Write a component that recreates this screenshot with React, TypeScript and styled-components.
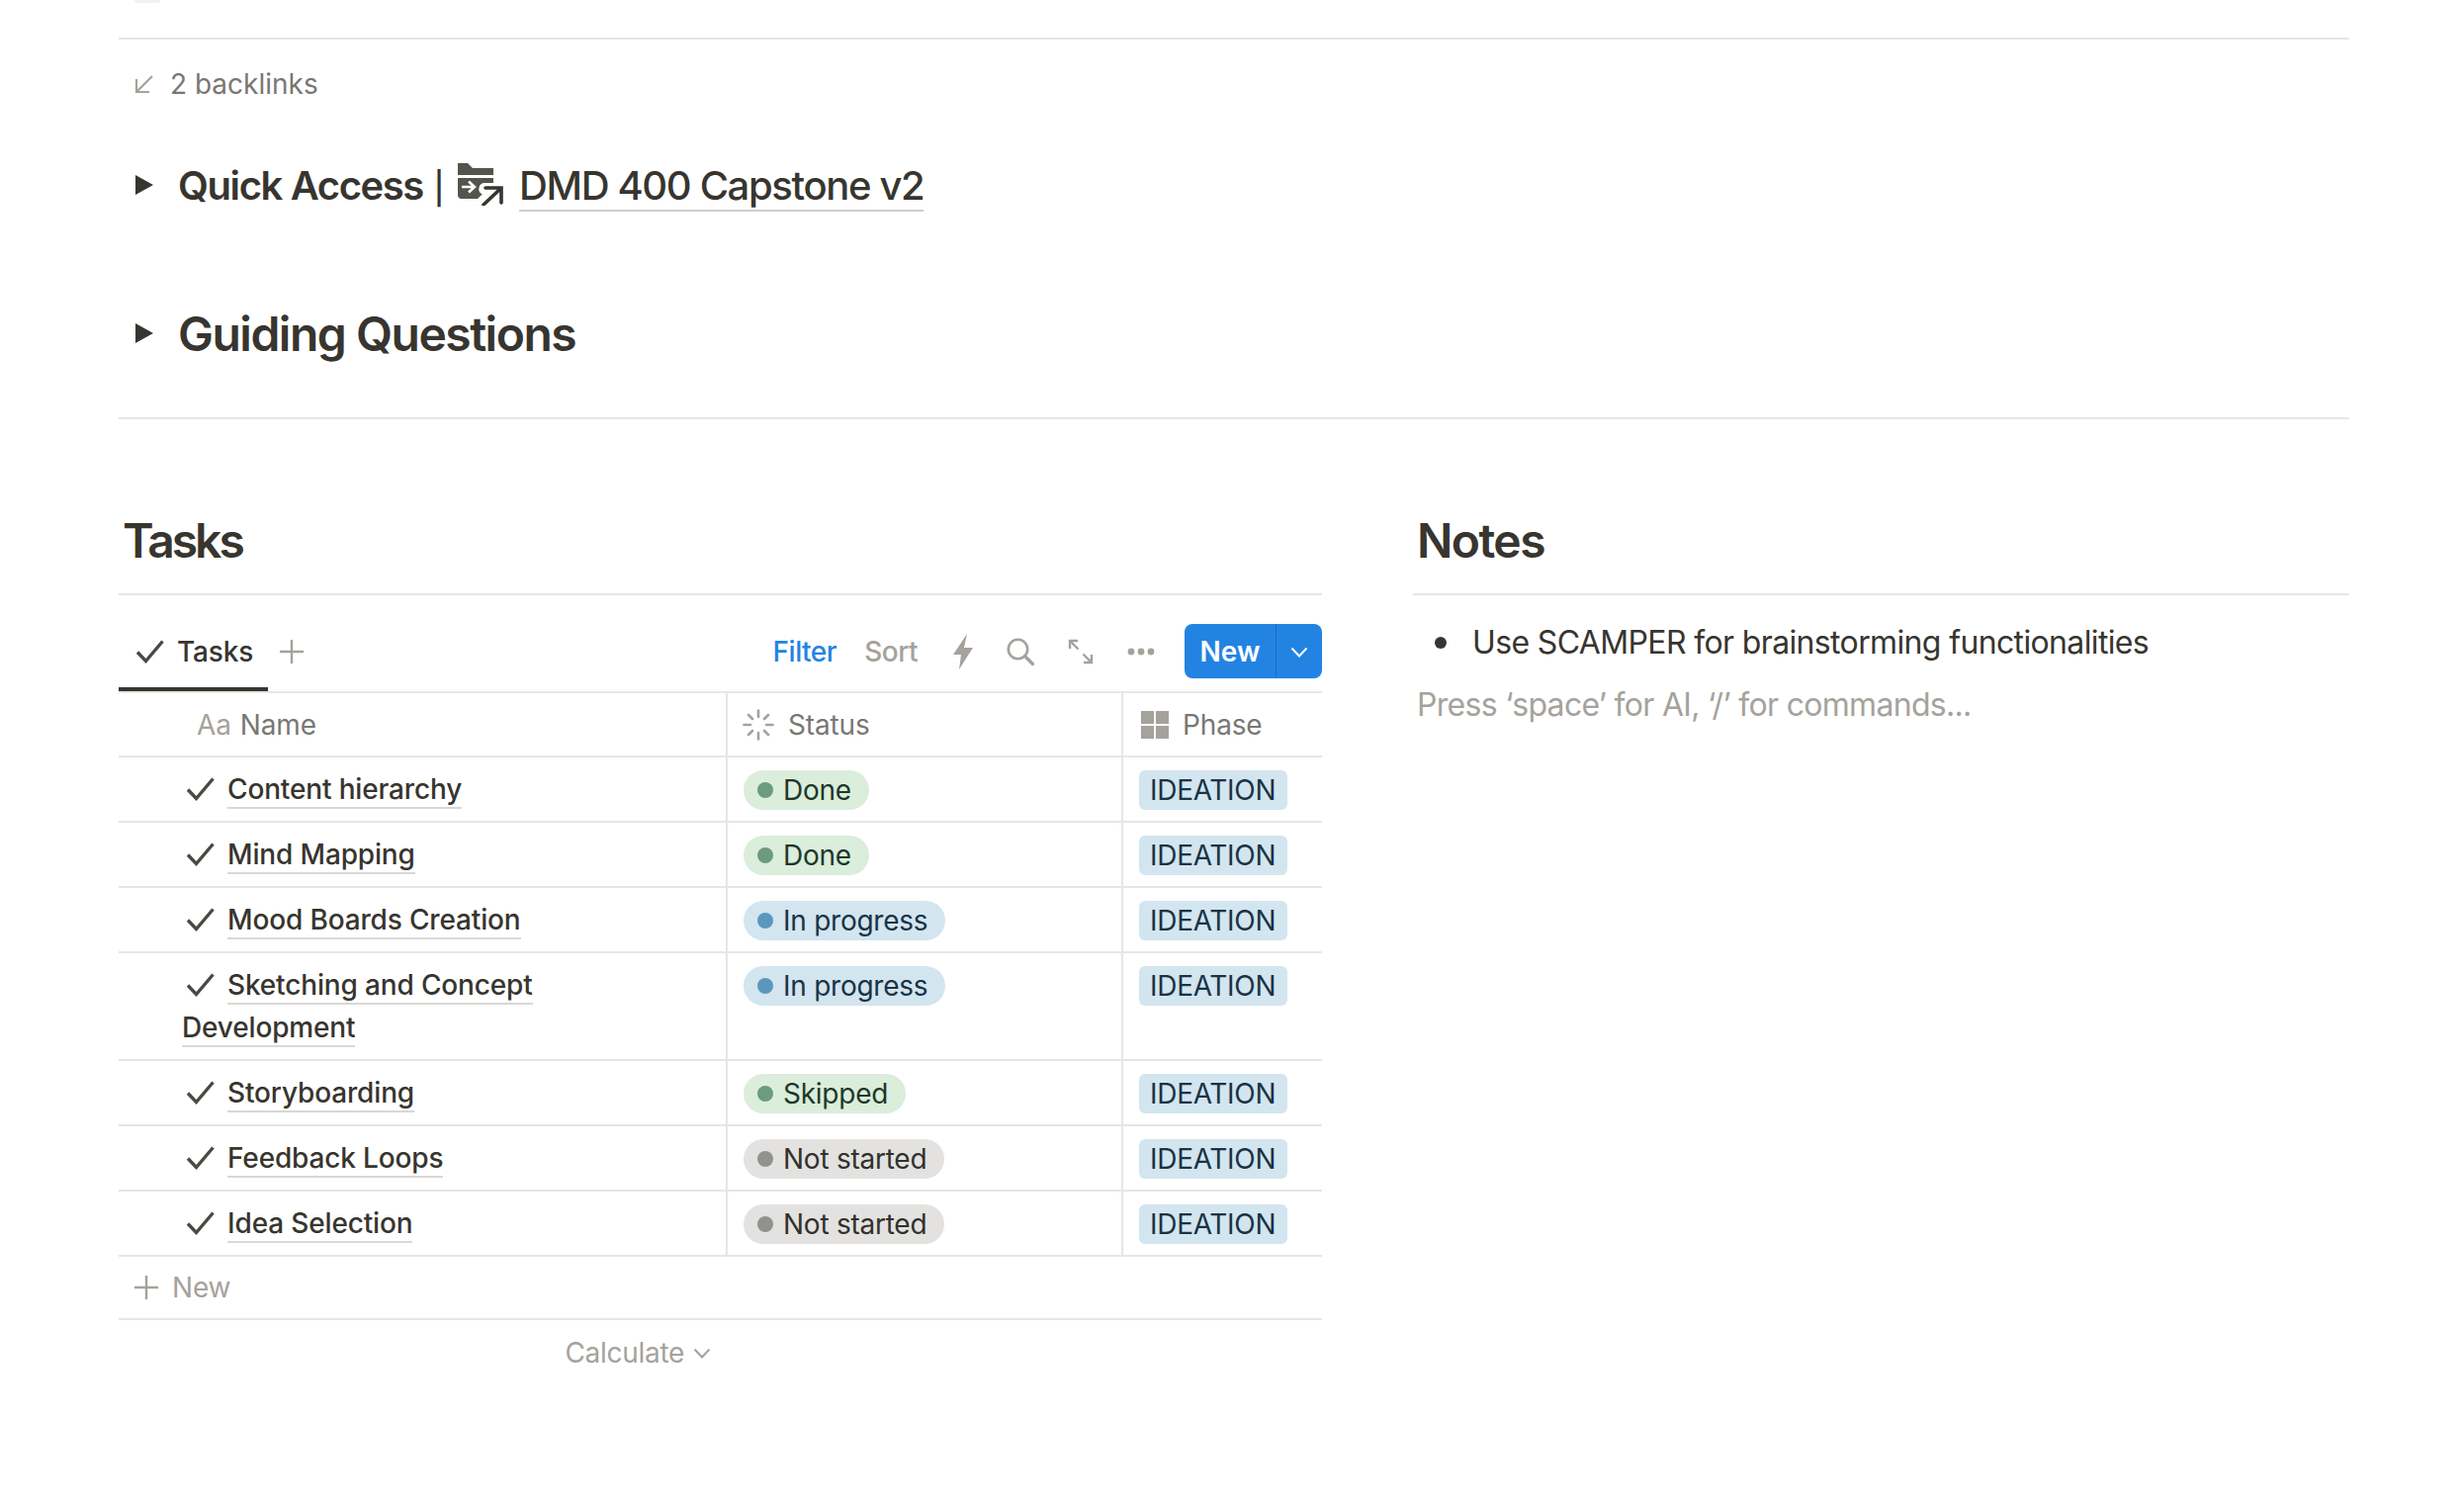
import React from 'react';
import styled, { createGlobalStyle } from 'styled-components';

const GlobalStyle = createGlobalStyle`
  html, body {
    margin: 0;
    padding: 0;
    background: #fff;
    color: #37352f;
    font-family: Inter, "Liberation Sans", sans-serif;
  }
`;

type StatusKind = 'done' | 'progress' | 'idle';

const tasks: { name: string; status: string; kind: StatusKind }[] = [
  { name: 'Content hierarchy', status: 'Done', kind: 'done' },
  { name: 'Mind Mapping', status: 'Done', kind: 'done' },
  { name: 'Mood Boards Creation', status: 'In progress', kind: 'progress' },
  { name: 'Sketching and Concept Development', status: 'In progress', kind: 'progress' },
  { name: 'Storyboarding', status: 'Skipped', kind: 'done' },
  { name: 'Feedback Loops', status: 'Not started', kind: 'idle' },
  { name: 'Idea Selection', status: 'Not started', kind: 'idle' },
];

const pillColors = {
  done: { bg: '#dbeddb', dot: '#6c9b7d', fg: '#1c3829' },
  progress: { bg: '#d3e5ef', dot: '#5b97bd', fg: '#183347' },
  idle: { bg: '#e3e2e0', dot: '#91918e', fg: '#32302c' },
};

const Check = () => (
  <CheckSvg width={30} height={30} viewBox="0 0 30 30">
    <path d="M2 15.5 L10.5 24.5 L27.5 4.5" fill="none" stroke="currentColor" strokeWidth="3.4" />
  </CheckSvg>
);

const Plus = ({ size = 26 }: { size?: number }) => (
  <svg width={size} height={size} viewBox="0 0 26 26">
    <path d="M13 1V25M1 13H25" stroke="#a5a29c" strokeWidth="2.4" fill="none" />
  </svg>
);

const Chevron = ({ color, size = 18 }: { color: string; size?: number }) => (
  <svg width={size} height={size} viewBox="0 0 18 18">
    <path d="M1.5 5.5 L9 13.5 L16.5 5.5" stroke={color} strokeWidth="2" fill="none" />
  </svg>
);

const BacklinkArrow = () => (
  <svg width="20" height="20" viewBox="0 0 20 20">
    <path d="M18 2 L3 17 M2 5V18H15" stroke="#a5a29c" strokeWidth="2.2" fill="none" />
  </svg>
);

const Triangle = () => (
  <svg width="18" height="20" viewBox="0 0 18 20">
    <path d="M0 0 L18 10 L0 20Z" fill="#37352f" />
  </svg>
);

const FolderLink = () => (
  <FolderSvg width="48" height="44" viewBox="0 0 48 44">
    <path d="M1 1 H11 L16 6 H37 V13 H1Z" fill="#55534e" />
    <path d="M1 16 H37 V21 H28 A6 6 0 0 0 25 32 H26 L21 37 H5 A4 4 0 0 1 1 33Z" fill="#55534e" />
    <path d="M5 25 H17 M12 19.5 L18 25 L12 30.5" stroke="#fff" strokeWidth="2.6" fill="none" />
    <path d="M29 26 H45 V41 M44 27 L27 43" stroke="#37352f" strokeWidth="3.6" fill="none" strokeLinecap="round" />
  </FolderSvg>
);

const Bolt = () => (
  <svg width="20" height="36" viewBox="0 0 20 36">
    <path d="M14 0 L0 21 H8 L6 36 L20 14 H11Z" fill="#a5a29c" />
  </svg>
);

const Search = () => (
  <svg width="28" height="28" viewBox="0 0 28 28">
    <circle cx="11.5" cy="11.5" r="9.7" fill="none" stroke="#a5a29c" strokeWidth="2.6" />
    <path d="M18.5 18.5 L26.5 26.5" stroke="#a5a29c" strokeWidth="3.2" strokeLinecap="round" />
  </svg>
);

const Expand = () => (
  <svg width="26" height="26" viewBox="0 0 26 26">
    <path d="M2 10V2H10 M2 2 L10.5 10.5 M24 16V24H16 M24 24 L15.5 15.5" stroke="#a5a29c" strokeWidth="2.4" fill="none" />
  </svg>
);

const Dots = () => (
  <svg width="28" height="8" viewBox="0 0 28 8">
    <circle cx="4" cy="4" r="3.4" fill="#a5a29c" />
    <circle cx="14" cy="4" r="3.4" fill="#a5a29c" />
    <circle cx="24" cy="4" r="3.4" fill="#a5a29c" />
  </svg>
);

const Spinner = () => (
  <svg width="32" height="32" viewBox="0 0 32 32">
    <g stroke="#a5a29c" strokeWidth="2.6" strokeLinecap="round">
      <path d="M16 1.5V8M16 24V30.5M1.5 16H8M24 16H30.5M6 6L10 10M22 22L26 26M6 26L10 22M22 10L26 6" />
    </g>
  </svg>
);

const GridIcon = () => (
  <svg width="28" height="28" viewBox="0 0 28 28">
    <path d="M0 0H13V13H0ZM15 0H28V13H15ZM0 15H13V28H0ZM15 15H28V28H15Z" fill="#a5a29c" />
  </svg>
);

const App = () => (
  <React.Fragment>
    <GlobalStyle />
    <Page>
      <TopSmudge />
      <Rule />
      <Backlinks>
        <BacklinkArrow />
        <span>2 backlinks</span>
      </Backlinks>
      <Toggle $mt={52}>
        <Triangle />
        <ToggleTitle>
          Quick Access <Pipe>|</Pipe> <FolderLink />
          <PageLink>DMD 400 Capstone v2</PageLink>
        </ToggleTitle>
      </Toggle>
      <Toggle $mt={90}>
        <Triangle />
        <ToggleTitle $heavy>Guiding Questions</ToggleTitle>
      </Toggle>
      <Rule $mt={55} />
      <Columns>
        <TasksColumn>
          <Heading $tracking={-3}>Tasks</Heading>
          <Rule />
          <Toolbar>
            <Tab>
              <Check />
              <span>Tasks</span>
            </Tab>
            <AddView>
              <Plus />
            </AddView>
            <Actions>
              <ActionText $active $trail={-6}>Filter</ActionText>
              <ActionText $trail={2}>Sort</ActionText>
              <Bolt />
              <Search />
              <Expand />
              <Dots />
              <NewButton>
                <NewLabel>New</NewLabel>
                <NewCaret>
                  <Chevron color="#fff" />
                </NewCaret>
              </NewButton>
            </Actions>
          </Toolbar>
          <Table>
            <HeaderRow>
              <NameHeader>
                <AaMark>Aa</AaMark>
                <span>Name</span>
              </NameHeader>
              <HeaderCell>
                <Spinner />
                <span>Status</span>
              </HeaderCell>
              <HeaderCell $last>
                <GridIcon />
                <span>Phase</span>
              </HeaderCell>
            </HeaderRow>
            {tasks.map((task) => (
              <Row key={task.name}>
                <NameCell>
                  <Check />
                  <TaskLink>{task.name}</TaskLink>
                </NameCell>
                <StatusCell>
                  <Pill $kind={task.kind}>
                    <Dot $kind={task.kind} />
                    {task.status}
                  </Pill>
                </StatusCell>
                <PhaseCell>
                  <Tag>IDEATION</Tag>
                </PhaseCell>
              </Row>
            ))}
            <NewRow>
              <Plus />
              <span>New</span>
            </NewRow>
            <CalcRow>
              <CalcCell>
                <span>Calculate</span>
                <Chevron color="#a5a29c" />
              </CalcCell>
            </CalcRow>
          </Table>
        </TasksColumn>
        <NotesColumn>
          <Heading $tracking={-1.6}>Notes</Heading>
          <Rule />
          <Bullet>Use SCAMPER for brainstorming functionalities</Bullet>
          <Placeholder>Press ‘space’ for AI, ‘/’ for commands...</Placeholder>
        </NotesColumn>
      </Columns>
    </Page>
  </React.Fragment>
);

export default App;

const Page = styled('main')`
  width: 2256px;
  height: 1524px;
  margin-left: 120px;
  overflow: hidden;
`;

const TopSmudge = styled('div')`
  width: 26px;
  height: 3px;
  margin-left: 16px;
  margin-bottom: 35px;
  border-radius: 0 0 10px 10px;
  background: #f1f1ef;
`;

const Rule = styled('hr')<{ $mt?: number }>`
  height: 2px;
  margin: ${(p) => p.$mt ?? 0}px 0 0;
  border: 0;
  background: #e6e6e4;
`;

const Backlinks = styled('div')`
  display: flex;
  align-items: center;
  gap: 16px;
  height: 40px;
  margin-top: 25px;
  padding-left: 16px;
  font-size: 28px;
  color: #787774;
`;

const Toggle = styled('div')<{ $mt: number }>`
  display: flex;
  align-items: center;
  gap: 25px;
  height: 60px;
  margin-top: ${(p) => p.$mt}px;
  padding-left: 17px;
`;

const ToggleTitle = styled('div')<{ $heavy?: boolean }>`
  font-size: ${(p) => (p.$heavy ? 48 : 40)}px;
  font-weight: 600;
  letter-spacing: ${(p) => (p.$heavy ? -1.5 : -1.4)}px;
  white-space: pre;
`;

const Pipe = styled('span')`
  font-size: 32px;
  font-weight: 500;
  margin: 0 2px;
`;

const FolderSvg = styled('svg')`
  display: inline-block;
  margin: 0 15px 0 3px;
  vertical-align: -6px;
`;

const PageLink = styled('span')`
  font-weight: 500;
  letter-spacing: -1.35px;
  border-bottom: 2px solid #cfcecb;
`;

const Columns = styled('div')`
  display: grid;
  grid-template-columns: 1217px 947px;
  column-gap: 92px;
  margin-top: 84px;
`;

const TasksColumn = styled('section')`
  min-width: 0;
`;

const NotesColumn = styled('section')`
  min-width: 0;
`;

const Heading = styled('h2')<{ $tracking: number }>`
  margin: 0;
  padding-left: 4px;
  height: 92px;
  font-size: 48px;
  line-height: 78px;
  font-weight: 600;
  letter-spacing: ${(p) => p.$tracking}px;
`;

const Toolbar = styled('div')`
  display: flex;
  align-items: center;
  height: 81px;
  padding-top: 16px;
`;

const Tab = styled('div')`
  display: flex;
  align-items: center;
  align-self: stretch;
  width: 151px;
  box-sizing: border-box;
  padding: 4px 0 0 13px;
  font-size: 28px;
  font-weight: 500;
  letter-spacing: -0.15px;
  border-bottom: 4px solid #37352f;
`;

const AddView = styled('div')`
  display: flex;
  margin-left: 11px;
`;

const Actions = styled('div')`
  display: flex;
  align-items: center;
  gap: 34px;
  margin-left: auto;
`;

const ActionText = styled('span')<{ $active?: boolean; $trail: number }>`
  font-size: 28px;
  font-weight: 500;
  letter-spacing: -0.5px;
  margin-right: ${(p) => p.$trail}px;
  color: ${(p) => (p.$active ? '#2383e2' : '#a5a29c')};
`;

const NewButton = styled('div')`
  display: flex;
  width: 139px;
  height: 55px;
  margin-left: -4px;
  border-radius: 8px;
  overflow: hidden;
  background: #2383e2;
  color: #fff;
  font-size: 28px;
  font-weight: 600;
`;

const NewLabel = styled('div')`
  display: flex;
  align-items: center;
  justify-content: center;
  width: 92px;
  border-right: 1px solid #1b6fc2;
`;

const NewCaret = styled('div')`
  display: flex;
  align-items: center;
  justify-content: center;
  flex: 1;
`;

const Table = styled('div')`
  font-size: 28px;
  letter-spacing: -0.15px;
`;

const HeaderRow = styled('div')`
  display: grid;
  grid-template-columns: 616px 400px 201px;
  height: 67px;
  box-sizing: border-box;
  border-top: 2px solid #e6e6e4;
  border-bottom: 2px solid #e6e6e4;
  color: #787774;
`;

const HeaderCell = styled('div')<{ $last?: boolean }>`
  display: flex;
  align-items: center;
  gap: 14px;
  padding-left: ${(p) => (p.$last ? 18 : 15)}px;
  border-right: ${(p) => (p.$last ? '0' : '2px solid #e6e6e4')};
`;

const NameHeader = styled('div')`
  display: flex;
  align-items: center;
  gap: 9px;
  padding-left: 79px;
  border-right: 2px solid #e6e6e4;
`;

const AaMark = styled('span')`
  color: #a5a29c;
`;

const Row = styled('div')`
  display: grid;
  grid-template-columns: 616px 400px 201px;
  border-bottom: 2px solid #e6e6e4;
`;

const NameCell = styled('div')`
  box-sizing: border-box;
  padding: 11px 90px 10px 64px;
  line-height: 43px;
  font-weight: 500;
  border-right: 2px solid #e6e6e4;
`;

const CheckSvg = styled('svg')`
  display: inline-block;
  flex: none;
  margin: 0 12px 0 4px;
  vertical-align: -5px;
  color: #4a4944;
`;

const TaskLink = styled('span')`
  border-bottom: 2px solid #d9d8d5;
  padding-bottom: 1px;
`;

const StatusCell = styled('div')`
  padding: 13px 0 0 16px;
  border-right: 2px solid #e6e6e4;
`;

const PhaseCell = styled('div')`
  padding: 13px 0 0 16px;
`;

const Pill = styled('span')<{ $kind: StatusKind }>`
  display: inline-flex;
  align-items: center;
  gap: 10px;
  height: 40px;
  padding: 0 18px 0 14px;
  border-radius: 20px;
  line-height: 40px;
  letter-spacing: -0.25px;
  background: ${(p) => pillColors[p.$kind].bg};
  color: ${(p) => pillColors[p.$kind].fg};
`;

const Dot = styled('span')<{ $kind: StatusKind }>`
  width: 16px;
  height: 16px;
  border-radius: 50%;
  background: ${(p) => pillColors[p.$kind].dot};
`;

const Tag = styled('span')`
  display: inline-block;
  height: 40px;
  padding: 0 12px 0 11px;
  border-radius: 6px;
  line-height: 40px;
  letter-spacing: -0.3px;
  background: #d3e5ef;
  color: #183347;
`;

const NewRow = styled('div')`
  display: flex;
  align-items: center;
  gap: 13px;
  height: 64px;
  box-sizing: border-box;
  padding-left: 15px;
  border-bottom: 2px solid #e6e6e4;
  color: #a5a29c;
`;

const CalcRow = styled('div')`
  display: grid;
  grid-template-columns: 616px 400px 201px;
  height: 66px;
`;

const CalcCell = styled('div')`
  display: flex;
  align-items: center;
  justify-content: flex-end;
  gap: 9px;
  padding-right: 17px;
  letter-spacing: -0.3px;
  color: #a5a29c;
`;

const Bullet = styled('div')`
  position: relative;
  margin-top: 26px;
  padding-left: 60px;
  font-size: 32px;
  line-height: 44px;
  letter-spacing: -0.64px;

  &::before {
    content: '';
    position: absolute;
    left: 22px;
    top: 16px;
    width: 12px;
    height: 12px;
    border-radius: 50%;
    background: #37352f;
  }
`;

const Placeholder = styled('div')`
  margin-top: 19px;
  padding-left: 4px;
  font-size: 32px;
  line-height: 44px;
  letter-spacing: -0.7px;
  color: #a5a29c;
`;
